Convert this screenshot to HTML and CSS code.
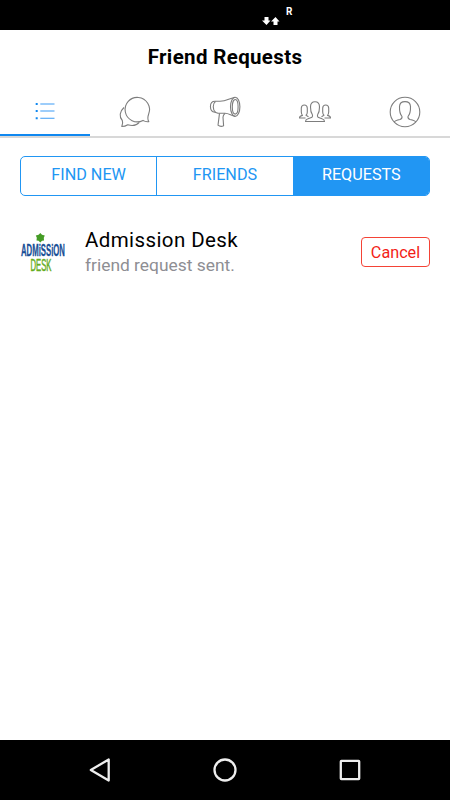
FILE: index.html
```html
<!DOCTYPE html>
<html lang="en">
  <head>
    <meta charset="UTF-8" />
    <meta name="viewport" content="width=device-width, initial-scale=1.0" />
    <title>Friend Requests</title>
    <link rel="stylesheet" href="styles.css">
  </head>
  <body>
    <div class="status-bar">
      <svg class="traffic" width="18" height="10" viewBox="0 0 18 10">
        <path d="M2.500 1h4v3.500h2L4.500 9 0 4.500h2.500z" />
        <path d="M11.500 9h4V5.500h2L13.500 1 9 5.500h2.500z" />
      </svg>
      <span class="roaming">R</span>
    </div>

    <header class="header">
      <h1>Friend Requests</h1>
    </header>

    <nav class="tabs">
      <a class="tab active">
        <svg width="50" height="44" viewBox="0 0 50 44">
          <path class="dots" d="M15.700 13h2v2h-2zM15.700 20h2v2h-2zM15.700 27.200h2v2h-2z" />
          <path d="M20.300 14h14.200M20.300 21h14.200M20.300 28.200h14.200" />
        </svg>
      </a>
      <a class="tab">
        <svg width="50" height="44" viewBox="0 0 50 44">
          <path d="M38.600 24.200A12.200 12.200 0 1 0 33 30.400Q35.300 32 38.800 31.600Q37 28.500 38.600 24.200z" />
          <path d="M14 17.500C9.500 21.500 9 27 12.300 30.500Q13.300 33 11.800 36.500Q15 36.500 17.800 34.700Q25 37 29.300 32.300" />
        </svg>
      </a>
      <a class="tab">
        <svg width="50" height="44" viewBox="0 0 50 44">
          <ellipse cx="35.200" cy="16.800" rx="4.700" ry="9.600" />
          <ellipse cx="35.200" cy="16.800" rx="2.900" ry="7.300" />
          <path d="M35 7.200C30 8.200 26 11.300 20 11.300H15C9 11.300 8.800 21.300 15 22.200L18 23.300H25C29 23.300 31 25.700 35 26.400" />
          <path d="M15.500 11.500C12.500 13.500 12.500 20 15.500 22.200M19.500 23.400L18 35.200Q20.500 37.300 23.600 35.800L23 27.200Q23 25 25 23.300" />
        </svg>
      </a>
      <a class="tab">
        <svg width="50" height="44" viewBox="0 0 50 44">
          <path d="M15.500 31.500Q15.500 29.500 18 28.800L22 27.200Q23 26 22.300 24.500Q20.500 22 20.500 17Q20.500 11.800 25 11.800T29.500 17Q29.500 22 27.700 24.500Q27 26 28 27.200L32 28.800Q34.500 29.500 34.500 31.500z" />
          <path d="M15.500 28H9.500Q9.500 26.200 12.500 25.400Q11.500 24.600 11.300 22V18Q11.500 15 14.300 15T17.300 18V22Q17.300 24.500 16 25.300L18.500 26.700" />
          <path d="M34.500 28H40.500Q40.500 26.200 37.500 25.400Q38.500 24.600 38.700 22V18Q38.500 15 35.700 15T32.700 18V22Q32.700 24.500 34 25.300L31.500 26.700" />
        </svg>
      </a>
      <a class="tab">
        <svg width="50" height="44" viewBox="0 0 50 44">
          <circle cx="25" cy="22" r="14.800" />
          <path d="M14.300 32Q15 30.500 20 29.500Q22.300 28.700 22 26.500Q19.300 23.500 19.500 16.500Q19.800 11.600 25 11.600T30.500 16.500Q30.700 23.500 28 26.500Q27.700 28.700 30 29.500Q35 30.500 35.700 32" />
        </svg>
      </a>
    </nav>

    <main class="content">
      <div class="segments">
        <button class="segment">FIND NEW</button>
        <button class="segment">FRIENDS</button>
        <button class="segment selected">REQUESTS</button>
      </div>

      <div class="request">
        <svg class="avatar" width="46" height="46" viewBox="0 0 46 46">
          <path class="leaf" d="M20.300 4L22 5.700 24.800 6.500 23.800 8.800 24 11.500 22 11.700 20.300 13.500 18.600 11.700 16.500 11.500 16.800 8.800 15.800 6.500 18.600 5.700z" />
          <text class="logo-top" transform="translate(1 27) scale(.485 1)">ADMiSSiON</text>
          <text class="logo-bottom" transform="translate(10.500 42) scale(.482 1)">DESK</text>
        </svg>
        <div class="info">
          <div class="name">Admission Desk</div>
          <div class="message">friend request sent.</div>
        </div>
        <button class="cancel">Cancel</button>
      </div>
    </main>

    <footer class="nav-bar">
      <svg width="30" height="30" viewBox="0 0 30 30">
        <path d="M5.800 15L23.700 4.500V25.500z" />
      </svg>
      <svg width="30" height="30" viewBox="0 0 30 30">
        <circle cx="15" cy="15" r="10.500" />
      </svg>
      <svg width="30" height="30" viewBox="0 0 30 30">
        <rect x="5.800" y="5.800" width="18.400" height="18.400" rx=".6" />
      </svg>
    </footer>
  </body>
</html>
```

FILE: styles.css
```css
* {
  margin: 0;
  padding: 0;
  box-sizing: border-box;
}

body {
  display: flex;
  flex-direction: column;
  height: 800px;
  background-color: #fff;
  font-family: Roboto, sans-serif;
}

button {
  background: none;
  border: none;
  font-family: inherit;
}

.status-bar {
  display: flex;
  gap: 6px;
  height: 30px;
  padding: 5px 0 0 262px;
  background-color: #000;
}

.traffic {
  margin-top: 11px;
  fill: #fff;
}

.roaming {
  color: #fff;
  font-size: 10px;
  font-weight: bold;
  line-height: 13px;
}

.header {
  height: 56px;
  text-align: center;
}

.header h1 {
  font-size: 20.5px;
  line-height: 54px;
  letter-spacing: 0.35px;
}

.tabs {
  display: flex;
  height: 52px;
  border-bottom: 2px solid #d8d8d8;
}

.tab {
  display: flex;
  flex: 1;
  justify-content: center;
  padding-top: 4px;
}

.tab svg {
  flex: none;
  fill: none;
  stroke: #7d7d7d;
  stroke-width: 1.1;
  stroke-linejoin: round;
}

.tab.active {
  height: 50px;
  border-bottom: 2px solid #1088f0;
}

.tab.active svg {
  stroke: #3d9cf5;
}

.tab .dots {
  fill: #1088f0;
  stroke: none;
}

.content {
  flex: 1;
  padding: 18px 20px 0;
}

.segments {
  display: flex;
  height: 40px;
  border: 1px solid #2196f3;
  border-radius: 5px;
  overflow: hidden;
}

.segment {
  flex: 1;
  padding-bottom: 3px;
  color: #2196f3;
  font-size: 16.2px;
}

.segment + .segment {
  border-left: 1px solid #2196f3;
}

.segment.selected {
  background-color: #2196f3;
  color: #fff;
}

.request {
  display: flex;
  align-items: center;
  margin-top: 31px;
}

.avatar {
  margin-right: 19px;
}

.leaf {
  fill: #459c25;
}

.logo-top,
.logo-bottom {
  font-family: "Liberation Sans", sans-serif;
  font-size: 16px;
  font-weight: bold;
  fill: #184f96;
  stroke: #184f96;
  stroke-width: 0.3;
}

.logo-bottom {
  font-weight: normal;
  fill: #65ad20;
  stroke: #65ad20;
  stroke-width: 0.5;
}

.info {
  flex: 1;
}

.name {
  font-size: 20.5px;
  line-height: 26px;
  letter-spacing: 0.4px;
}

.message {
  color: #8e8e93;
  font-size: 17.4px;
  line-height: 24px;
}

.cancel {
  width: 69px;
  height: 30px;
  border: 1px solid #f44336;
  border-radius: 4px;
  color: #f31d17;
  font-size: 16.2px;
}

.nav-bar {
  display: flex;
  justify-content: space-between;
  height: 60px;
  padding: 15px 85px;
  background-color: #000;
}

.nav-bar svg {
  fill: none;
  stroke: #eee;
  stroke-width: 2.3;
  stroke-linejoin: round;
}
```
